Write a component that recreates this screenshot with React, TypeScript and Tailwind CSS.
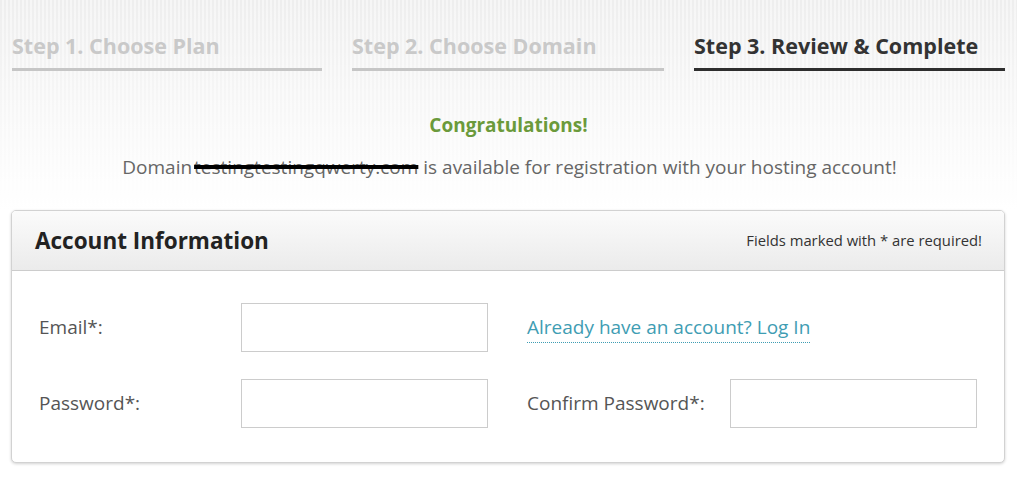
import React from "react";

export default function App() {
  const font = { fontFamily: '"Open Sans", "Liberation Sans", sans-serif' };
  return (
    <div
      className="w-[1017px] h-[479px] overflow-hidden bg-white bg-[linear-gradient(to_bottom,rgba(255,255,255,0)_0px,rgba(255,255,255,0.6)_120px,#ffffff_210px),repeating-linear-gradient(90deg,#eeeeee_0px,#eeeeee_2px,#f6f6f6_2px,#f6f6f6_4px)]"
      style={font}
    >
      {/* Steps */}
      <div className="flex gap-[30px] pl-[12px] pt-[32px]">
        <div className="w-[310px] border-b-[3px] border-[#c6c6c6] pb-[8px]">
          <span className="text-[21.5px] font-bold leading-[28px] text-[#c9c9c9]">Step 1. Choose Plan</span>
        </div>
        <div className="w-[312px] border-b-[3px] border-[#c6c6c6] pb-[8px]">
          <span className="text-[21.5px] font-bold leading-[28px] text-[#c9c9c9]">Step 2. Choose Domain</span>
        </div>
        <div className="w-[311px] border-b-[3px] border-[#2e2e2e] pb-[8px]">
          <span className="text-[21.5px] font-bold leading-[28px] text-[#333333]">Step 3. Review &amp; Complete</span>
        </div>
      </div>

      {/* Congratulations */}
      <div className="mt-[42px] text-center">
        <div className="text-[19px] font-bold leading-[24px] text-[#6b9a3b]">Congratulations!</div>
        <div className="mt-[18px] text-[19px] leading-[24px] text-[#666666] pl-[2px]">
          Domain
          <span className="ml-[2px] line-through decoration-[#000000] decoration-[4px]">testingtestingqwerty.com</span>
          {" "}is available for registration with your hosting account!
        </div>
      </div>

      {/* Card */}
      <div className="mx-[11px] mt-[31px] w-[994px] rounded-[5px] border border-[#d2d2d2] bg-white shadow-[0_1px_3px_rgba(0,0,0,0.18)] overflow-hidden">
        <div className="flex h-[60px] items-center justify-between border-b border-[#cccccc] bg-[linear-gradient(to_bottom,#fbfbfb,#ebebeb)] pl-[23px] pr-[22px]">
          <span className="text-[22.5px] font-bold text-[#222222]">Account Information</span>
          <span className="text-[14.8px] text-[#333333]">Fields marked with * are required!</span>
        </div>
        <div className="px-[27px] pt-[32px] pb-[34px]">
          <div className="grid grid-cols-[202px_247px_39px_203px_247px] gap-y-[27px] items-center">
            <label className="text-[19px] text-[#555555]">Email*:</label>
            <input className="h-[49px] w-[247px] border border-[#cccccc] bg-white outline-none" />
            <div />
            <div className="col-span-2">
              <a className="text-[19px] text-[#3f9db3] border-b border-dotted border-[#3f9db3] pb-[2px]" href="#">
                Already have an account? Log In
              </a>
            </div>
            <label className="text-[19px] text-[#555555]">Password*:</label>
            <input type="password" className="h-[49px] w-[247px] border border-[#cccccc] bg-white outline-none" />
            <div />
            <label className="text-[19px] text-[#555555]">Confirm Password*:</label>
            <input type="password" className="h-[49px] w-[247px] border border-[#cccccc] bg-white outline-none" />
          </div>
        </div>
      </div>
    </div>
  );
}
